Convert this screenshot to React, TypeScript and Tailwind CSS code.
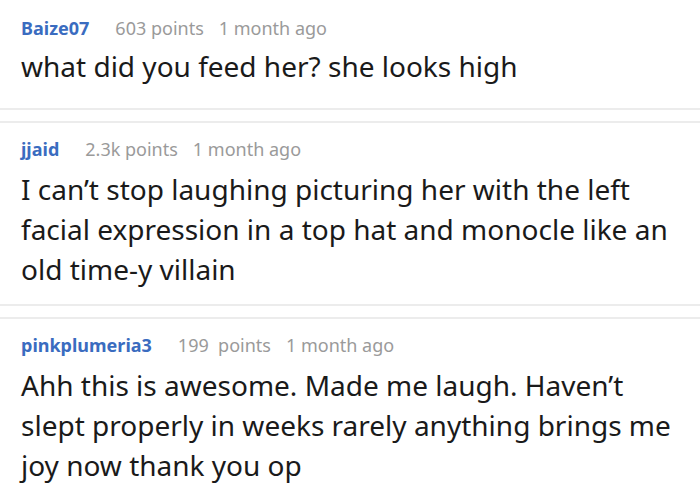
const comments = [
  {
    user: "Baize07",
    points: "603 points",
    time: "1 month ago",
    text: "what did you feed her? she looks high",
  },
  {
    user: "jjaid",
    points: "2.3k points",
    time: "1 month ago",
    text: "I can’t stop laughing picturing her with the left facial expression in a top hat and monocle like an old time-y villain",
  },
  {
    user: "pinkplumeria3",
    points: "199  points",
    time: "1 month ago",
    text: "Ahh this is awesome. Made me laugh. Haven’t slept properly in weeks rarely anything brings me joy now thank you op",
  },
];

export default function App() {
  return (
    <div
      className="w-[700px] h-[496px] overflow-hidden bg-white"
      style={{ fontFamily: '"Noto Sans", "Open Sans", sans-serif' }}
    >
      <div className="-mt-[2px] flex flex-col gap-[11px]">
        {comments.map((c, i) => (
          <div
            key={c.user}
            className={`border-y-2 border-[#ececec] bg-white pl-[21px] pr-2 ${
              i === 0 ? "pt-[16px] pb-[22px]" : "pt-[14px] pb-[15px]"
            }`}
          >
            <div className="flex items-baseline text-[18px] leading-[24px]">
              <span className="font-bold text-[#3a6cc0]">{c.user}</span>
              <span className="ml-[26px] whitespace-pre text-[#9a9a9a]">{c.points}</span>
              <span className="ml-[15px] text-[#9a9a9a]">{c.time}</span>
            </div>
            <p
              className={`${
                i === 0 ? "mt-[6px]" : "mt-[8px]"
              } max-w-[668px] text-[28px] leading-[40px] text-[#1a1a1a]`}
            >
              {c.text}
            </p>
          </div>
        ))}
      </div>
    </div>
  );
}
